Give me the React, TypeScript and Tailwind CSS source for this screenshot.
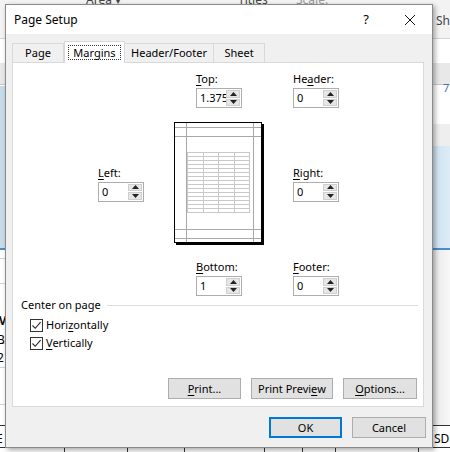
import type { ReactNode } from "react";

// Mnemonic label: underline one character, the way Win32 dialogs do.
function Mn({ text, at }: { text: string; at: number }) {
    return (
        <>
            {text.slice(0, at)}
            <span className="underline decoration-1 underline-offset-[2px]">{text[at]}</span>
            {text.slice(at + 1)}
        </>
    );
}

function SpinBox({ label, at, value }: { label: string; at: number; value: string }) {
    return (
        <div className="flex w-[46px] flex-col">
            <span className="mb-[2px] h-[14px] whitespace-nowrap leading-[14px]">
                <Mn text={label} at={at} />
            </span>
            <div className="relative flex h-[20px] overflow-hidden border border-[#adadad] bg-white">
                <span className="w-[29px] overflow-hidden whitespace-nowrap pl-[3px] leading-[18px]">{value}</span>
                <div className="flex w-[15px] flex-col gap-px bg-white py-px pr-px">
                    <span className="flex flex-1 items-center justify-center border border-[#cfcfcf] bg-[#e6e6e6]">
                        <svg width="7" height="4" viewBox="0 0 7 4">
                            <path d="M0 4 L3.5 0 L7 4 Z" fill="#222" />
                        </svg>
                    </span>
                    <span className="flex flex-1 items-center justify-center border border-[#cfcfcf] bg-[#e6e6e6]">
                        <svg width="7" height="4" viewBox="0 0 7 4">
                            <path d="M0 0 L3.5 4 L7 0 Z" fill="#222" />
                        </svg>
                    </span>
                </div>
            </div>
        </div>
    );
}

function PagePreview() {
    const rows = Array.from({ length: 14 }, (_, i) => 34.5 + i * 4);
    return (
        <svg width="90" height="123" viewBox="0 0 90 123" className="shrink-0">
            <rect x="0.5" y="0.5" width="87" height="120" fill="#fff" stroke="#000" />
            <path d="M89 2 V122 H2" stroke="#000" strokeWidth="2" fill="none" />
            {/* margin guides */}
            <g stroke="#a8a8a8" strokeWidth="1">
                <line x1="12.5" y1="1" x2="12.5" y2="120" />
                <line x1="79.5" y1="1" x2="79.5" y2="120" />
                <line x1="1" y1="5.5" x2="87" y2="5.5" />
                <line x1="1" y1="14.5" x2="87" y2="14.5" />
                <line x1="1" y1="107.5" x2="87" y2="107.5" />
                <line x1="1" y1="116.5" x2="87" y2="116.5" />
            </g>
            {/* sheet grid */}
            <g stroke="#c9c9c9" strokeWidth="1">
                <rect x="13.5" y="30.5" width="62" height="60" fill="none" />
                <line x1="29.5" y1="30" x2="29.5" y2="91" />
                <line x1="44.5" y1="30" x2="44.5" y2="91" />
                <line x1="60.5" y1="30" x2="60.5" y2="91" />
                {rows.map((y) => (
                    <line key={y} x1="13" y1={y} x2="76" y2={y} />
                ))}
            </g>
        </svg>
    );
}

function Check({ label, at }: { label: string; at: number }) {
    return (
        <div className="flex h-[18px] items-center">
            <span className="flex h-[13px] w-[13px] items-center justify-center border border-[#333] bg-white">
                <svg width="11" height="11" viewBox="0 0 11 11">
                    <path d="M1.5 5.5 L4.2 8.3 L9.6 2.2" stroke="#222" strokeWidth="1.1" fill="none" />
                </svg>
            </span>
            <span className="ml-[3px] leading-[14px]">
                <Mn text={label} at={at} />
            </span>
        </div>
    );
}

function Btn({ children, w, primary }: { children: ReactNode; w: string; primary?: boolean }) {
    return (
        <button
            className={`flex h-[21px] items-center justify-center bg-[#e1e1e1] leading-none text-black ${w} ${
                primary ? "border-2 border-[#0078d7]" : "border border-[#adadad]"
            }`}
        >
            {children}
        </button>
    );
}

function Tab({ label, w, active }: { label: string; w: string; active?: boolean }) {
    if (active) {
        return (
            <div className={`relative z-10 -mb-px flex h-[22px] items-center justify-center border border-b-0 border-[#d9d9d9] bg-white ${w}`}>
                <span className="border border-dotted border-[#333] px-[4px] leading-[13px]">{label}</span>
            </div>
        );
    }
    return (
        <div className={`-ml-px flex h-[19px] items-center justify-center border border-b-0 border-[#d9d9d9] bg-[#f0f0f0] first:ml-0 ${w}`}>
            {label}
        </div>
    );
}

function ExcelBackdrop() {
    const cols = [64, 127, 184, 264, 302, 335, 418];
    return (
        <div className="absolute inset-0">
            {/* ribbon */}
            <div className="absolute left-0 right-0 top-0 h-[38px] bg-[#f3f3f3]" />
            <div className="absolute left-0 right-0 top-[38px] h-px bg-[#d4d4d4]" />
            <div className="absolute left-0 right-0 top-[63px] h-[22px] bg-[#e8e8e8]" />
            <div className="absolute left-0 right-0 top-[84px] h-px bg-[#c8c8c8]" />
            <div className="absolute left-0 right-0 top-[124px] h-[22px] bg-[#eeeeee]" />
            <span className="absolute left-[86px] top-[-9px] text-[12px] text-[#444]">Area ▾</span>
            <span className="absolute left-[238px] top-[-9px] text-[12px] text-[#444]">Titles</span>
            <span className="absolute left-[296px] top-[-9px] text-[12px] text-[#999]">Scale:</span>
            <span className="absolute left-[436px] top-[12px] text-[12px] text-[#444]">Sheet</span>
            <span className="absolute left-[443px] top-[80px] text-[11px] text-[#4a6fa5]">7</span>
            {/* selected range */}
            <div className="absolute left-0 top-[86px] h-[162px] w-[6px] bg-[#cadbe9]" />
            <div className="absolute right-0 top-[146px] h-[102px] w-[18px] bg-gradient-to-r from-[#cfe3f2] to-[#dcebf6]" />
            <div className="absolute left-0 right-0 top-[248px] h-[2px] bg-[#4a8fc8]" />
            {/* rows */}
            {[258, 283, 322, 343, 367, 404].map((y) => (
                <div key={y} className="absolute left-0 right-0 h-px bg-[#d4d4d4]" style={{ top: y }} />
            ))}
            <div className="absolute right-0 top-[250px] h-[175px] w-[18px] bg-gradient-to-r from-[#e8e8e8] to-[#f7f7f7]" />
            <div className="absolute left-0 right-0 top-[425px] h-px bg-[#333]" />
            <div className="absolute left-0 right-0 top-[447px] h-px bg-[#333]" />
            {cols.map((x) => (
                <div key={x} className="absolute top-[447px] h-[5px] w-px bg-[#333]" style={{ left: x }} />
            ))}
            <span className="absolute left-[-3px] top-[312px] text-[12px] font-bold">M</span>
            <span className="absolute left-[-3px] top-[331px] text-[12px]">B</span>
            <span className="absolute left-[-3px] top-[349px] text-[12px]">2</span>
            <span className="absolute left-[-4px] top-[430px] text-[12px]">E</span>
            <span className="absolute left-[434px] top-[430px] text-[12px]">SD</span>
        </div>
    );
}

export default function App() {
    return (
        <div className="relative h-[452px] w-[450px] overflow-hidden bg-white font-['Noto_Sans',sans-serif] text-[11px] text-black">
            <ExcelBackdrop />

            <div className="absolute left-[5px] top-[4px] flex h-[444px] w-[428px] flex-col border border-[#8a8a8a] bg-[#f0f0f0] shadow-[2px_2px_5px_rgba(0,0,0,0.35)]">
                {/* title bar */}
                <div className="flex h-[29px] shrink-0 items-center bg-white pl-[8px]">
                    <span className="flex-1 text-[12px]">Page Setup</span>
                    <span className="w-[12px] text-center text-[13px]">?</span>
                    <span className="ml-[32px] mr-[16px] flex w-[12px] justify-center">
                        <svg width="12" height="12" viewBox="0 0 12 12">
                            <path d="M1 1 L11 11 M11 1 L1 11" stroke="#111" strokeWidth="1" />
                        </svg>
                    </span>
                </div>

                <div className="flex flex-col pl-[6px] pt-[7px]">
                    {/* tabs */}
                    <div className="flex h-[21px] items-end">
                        <Tab label="Page" w="w-[52px]" />
                        <Tab label="Margins" w="w-[61px]" active />
                        <Tab label="Header/Footer" w="w-[90px]" />
                        <Tab label="Sheet" w="w-[52px]" />
                    </div>

                    {/* panel */}
                    <div className="flex h-[345px] w-[412px] flex-col border border-[#d9d9d9] bg-white">
                        <div className="mt-[9px] flex gap-[51px] pl-[183px]">
                            <SpinBox label="Top:" at={0} value="1.375" />
                            <SpinBox label="Header:" at={2} value="0" />
                        </div>

                        <div className="mt-[14px] flex items-center pl-[85px]">
                            <SpinBox label="Left:" at={0} value="0" />
                            <div className="ml-[30px]">
                                <PagePreview />
                            </div>
                            <div className="ml-[29px]">
                                <SpinBox label="Right:" at={0} value="0" />
                            </div>
                        </div>

                        <div className="mt-[15px] flex gap-[51px] pl-[183px]">
                            <SpinBox label="Bottom:" at={0} value="1" />
                            <SpinBox label="Footer:" at={0} value="0" />
                        </div>

                        {/* Center on page group */}
                        <div className="mt-[2px] flex h-[14px] items-center pl-[8px] pr-[5px]">
                            <span className="leading-[14px]">Center on page</span>
                            <span className="ml-[6px] h-px flex-1 bg-[#dcdcdc]" />
                        </div>
                        <div className="mt-[4px] flex flex-col pl-[17px]">
                            <Check label="Horizontally" at={4} />
                            <Check label="Vertically" at={0} />
                        </div>

                        <div className="mt-[26px] flex justify-end gap-[10px] pr-[6px]">
                            <Btn w="w-[73px]">
                                <Mn text="Print..." at={0} />
                            </Btn>
                            <Btn w="w-[82px]">
                                <Mn text="Print Preview" at={11} />
                            </Btn>
                            <Btn w="w-[74px]">
                                <Mn text="Options..." at={0} />
                            </Btn>
                        </div>
                    </div>

                    {/* dialog buttons */}
                    <div className="mt-[10px] flex justify-end gap-[10px] pr-[6px]">
                        <Btn w="w-[73px]" primary>
                            OK
                        </Btn>
                        <Btn w="w-[74px]">Cancel</Btn>
                    </div>
                </div>
            </div>
        </div>
    );
}
